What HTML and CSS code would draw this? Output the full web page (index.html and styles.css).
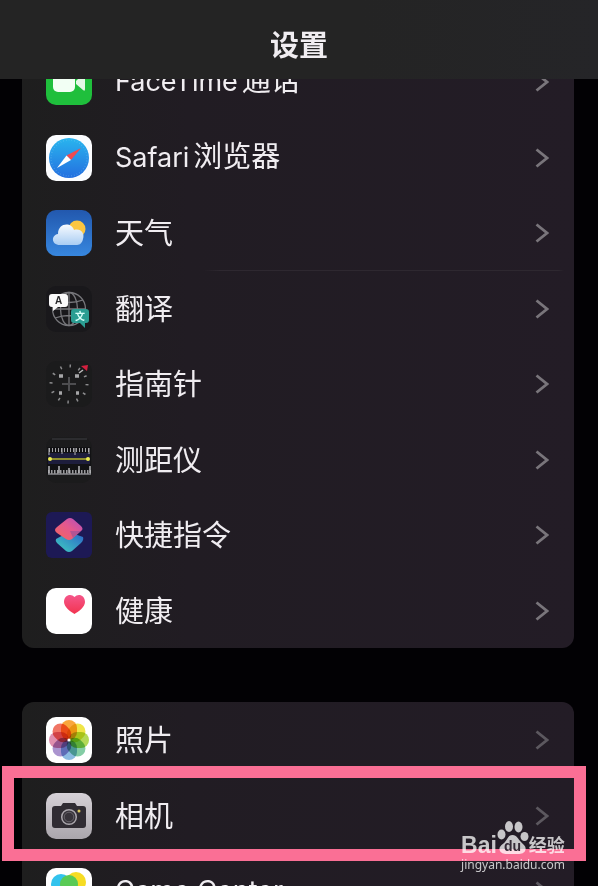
FILE: index.html
```html
<!DOCTYPE html>
<html lang="zh-CN">
<head>
    <meta charset="UTF-8">
    <meta name="viewport" content="width=device-width, initial-scale=1">
    <title>设置</title>
    <link rel="stylesheet" href="styles.css">
</head>
<body>
    <svg class="defs" aria-hidden="true">
        <symbol id="chevron" viewBox="0 0 14 20">
            <path d="M1.5 1.5 12 10 1.5 18.5" fill="none" stroke="currentColor" stroke-width="2.8"/>
        </symbol>
    </svg>

    <header class="topbar">
        <h1>设置</h1>
    </header>

    <main class="content">
        <ul class="group scrolled">
            <li>
                <a class="row" href="#facetime">
                    <svg class="icon" viewBox="0 0 46 46">
                        <rect width="46" height="46" rx="10" fill="#1fbf3c"/>
                        <rect x="7" y="13" width="22" height="20" rx="5" fill="#f2fff4"/>
                        <path d="M30 22 37 15Q39 14 39 17V30Q39 33 37 31L30 25Z" fill="#e4f8e6"/>
                    </svg>
                    <span class="label"><span class="latin">FaceTime</span>通话</span>
                    <svg class="chevron"><use href="#chevron"/></svg>
                </a>
            </li>
            <li>
                <a class="row" href="#safari">
                    <svg class="icon" viewBox="0 0 46 46">
                        <defs>
                            <linearGradient id="sky" x1="0" y1="0" x2="0" y2="1">
                                <stop offset="0" stop-color="#29b5ee"/>
                                <stop offset="1" stop-color="#246fe0"/>
                            </linearGradient>
                        </defs>
                        <rect width="46" height="46" rx="10" fill="#fcfdff"/>
                        <circle cx="23" cy="23" r="20" fill="url(#sky)"/>
                        <circle cx="23" cy="23" r="18" fill="none" stroke="#8fd4f6" stroke-width="1.5" stroke-dasharray="0.6 2.2" opacity=".4"/>
                        <path d="M35 13 20.5 20.5 25 25Z" fill="#ef4a50"/>
                        <path d="M11 33 20.5 20.5 25 25Z" fill="#fff"/>
                    </svg>
                    <span class="label"><span class="latin">Safari</span>浏览器</span>
                    <svg class="chevron"><use href="#chevron"/></svg>
                </a>
            </li>
            <li class="divided">
                <a class="row" href="#weather">
                    <svg class="icon" viewBox="0 0 46 46">
                        <defs>
                            <linearGradient id="day" x1="0" y1="0" x2="0" y2="1">
                                <stop offset="0" stop-color="#2258ae"/>
                                <stop offset="1" stop-color="#3787df"/>
                            </linearGradient>
                            <linearGradient id="cloud" x1="0" y1="0" x2="0" y2="1">
                                <stop offset="0" stop-color="#f8fbff"/>
                                <stop offset="1" stop-color="#a9cdf3"/>
                            </linearGradient>
                        </defs>
                        <rect width="46" height="46" rx="10" fill="url(#day)"/>
                        <circle cx="31" cy="19" r="8.5" fill="#fbc641"/>
                        <path d="M14 35C5 35 5 25 12 24C12 12 26 12 28 20C35 18 39 24 37 29C36 34 33 35 30 35Z" fill="url(#cloud)"/>
                    </svg>
                    <span class="label">天气</span>
                    <svg class="chevron"><use href="#chevron"/></svg>
                </a>
            </li>
            <li>
                <a class="row" href="#translate">
                    <svg class="icon" viewBox="0 0 46 46">
                        <rect width="46" height="46" rx="10" fill="#19181b"/>
                        <g fill="none" stroke="#77777b" stroke-width="1.3">
                            <circle cx="23" cy="23" r="16.5"/>
                            <ellipse cx="23" cy="23" rx="8.5" ry="16.5"/>
                            <path d="M23 6V40M6 23H40M9 14Q23 19 37 14M9 32Q23 27 37 32"/>
                        </g>
                        <path d="M6 8H19Q22 8 22 11V18Q22 21 19 21H12L7 25V21H6Q3 21 3 18V11Q3 8 6 8Z" fill="#fafafa"/>
                        <text class="glyph-a" x="9" y="18">A</text>
                        <path d="M28 23H40Q43 23 43 26V34Q43 37 40 37H39V42L34 37H28Q25 37 25 34V26Q25 23 28 23Z" fill="#2b9d92"/>
                        <text class="glyph-wen" x="29" y="34">文</text>
                    </svg>
                    <span class="label">翻译</span>
                    <svg class="chevron"><use href="#chevron"/></svg>
                </a>
            </li>
            <li>
                <a class="row" href="#compass">
                    <svg class="icon" viewBox="0 0 46 46">
                        <rect width="46" height="46" rx="10" fill="#1b1b1c"/>
                        <circle cx="23" cy="23" r="18" fill="none" stroke="#8c8c8e" stroke-width="3" stroke-dasharray="1.5 7.925"/>
                        <path d="M23 16V30M16 23H30" stroke="#4d4d50" stroke-width="2"/>
                        <path d="M13 15H17M29 15H33M13 32H16M30 32H33" stroke="#a6a6a8" stroke-width="3.5"/>
                        <path d="M33 12 37 9" stroke="#bbb" stroke-width="1.5"/>
                        <path d="M35 5 42 4 41 10Z" fill="#d4203f"/>
                    </svg>
                    <span class="label">指南针</span>
                    <svg class="chevron"><use href="#chevron"/></svg>
                </a>
            </li>
            <li>
                <a class="row" href="#measure">
                    <svg class="icon" viewBox="0 0 46 46">
                        <rect width="46" height="46" rx="10" fill="#1b1b1c"/>
                        <path d="M6 2H41" stroke="#3f3f42"/>
                        <rect x="1" y="10" width="44" height="27" fill="#121214"/>
                        <rect x="2" y="16" width="42" height="11" fill="#1d1d3c"/>
                        <path d="M3 13H44" stroke="#a3a3a6" stroke-width="4" stroke-dasharray="1 2"/>
                        <path d="M3 11V18M16 11V17M29 11V18M43 11V17" stroke="#b5b5b8"/>
                        <path d="M2 35H45" stroke="#9a9a9d" stroke-width="4" stroke-dasharray="1.5 1.5"/>
                        <path d="M2 37H45" stroke="#8d8d90" stroke-width="1.5"/>
                        <path d="M3 29V36M13 29V36M23 31V36M33 29V36M44 29V36" stroke="#b5b5b8" stroke-width="1.5"/>
                        <path d="M4 22H42" stroke="#b6b62a" stroke-width="1.6"/>
                        <circle cx="4" cy="22" r="2" fill="#ecec52"/>
                        <circle cx="42" cy="22" r="2" fill="#ecec52"/>
                    </svg>
                    <span class="label">测距仪</span>
                    <svg class="chevron"><use href="#chevron"/></svg>
                </a>
            </li>
            <li>
                <a class="row" href="#shortcuts">
                    <svg class="icon" viewBox="0 0 46 46">
                        <defs>
                            <linearGradient id="pink" x1="1" y1="0" x2="0" y2="1">
                                <stop offset="0" stop-color="#ae4fc0"/>
                                <stop offset=".45" stop-color="#e4588f"/>
                                <stop offset="1" stop-color="#f3665b"/>
                            </linearGradient>
                            <linearGradient id="teal" x1="1" y1="0" x2="0" y2="1">
                                <stop offset="0" stop-color="#2b62c8"/>
                                <stop offset="1" stop-color="#40cfc0"/>
                            </linearGradient>
                        </defs>
                        <rect width="46" height="46" rx="6" fill="#1d1955"/>
                        <path d="M10 27 23 20 37 25Q38 28 35 31L26 39Q23 41 20 39L11 31Q9 29 10 27Z" fill="url(#teal)"/>
                        <path d="M21 7Q24 5 27 7L35 14Q38 17 35 19L26 27Q23 29 20 27L11 21Q7 18 11 15Z" fill="url(#pink)"/>
                        <path d="M24 19 35 19 27 26Z" fill="#81509b" opacity=".5"/>
                    </svg>
                    <span class="label">快捷指令</span>
                    <svg class="chevron"><use href="#chevron"/></svg>
                </a>
            </li>
            <li>
                <a class="row" href="#health">
                    <svg class="icon" viewBox="0 0 46 46">
                        <defs>
                            <linearGradient id="heart" x1="0" y1="0" x2="0" y2="1">
                                <stop offset="0" stop-color="#f5568a"/>
                                <stop offset="1" stop-color="#f23450"/>
                            </linearGradient>
                        </defs>
                        <rect width="46" height="46" rx="10" fill="#fff"/>
                        <path d="M28.5 9C25 5 18 7 18 14C18 19 25 24 28.5 26C32 24 39 19 39 14C39 7 32 5 28.5 9Z" fill="url(#heart)"/>
                    </svg>
                    <span class="label">健康</span>
                    <svg class="chevron"><use href="#chevron"/></svg>
                </a>
            </li>
        </ul>

        <ul class="group dim">
            <li>
                <a class="row" href="#photos">
                    <svg class="icon" viewBox="0 0 46 46">
                        <rect width="46" height="46" rx="10" fill="#fff"/>
                        <g class="petals">
                            <rect x="15" y="3" width="16" height="20" rx="8" fill="#f9a63c"/>
                            <rect x="15" y="3" width="16" height="20" rx="8" fill="#efe548" transform="rotate(45 23 23)"/>
                            <rect x="15" y="3" width="16" height="20" rx="8" fill="#b3d957" transform="rotate(90 23 23)"/>
                            <rect x="15" y="3" width="16" height="20" rx="8" fill="#84cda5" transform="rotate(135 23 23)"/>
                            <rect x="15" y="3" width="16" height="20" rx="8" fill="#8cbbe2" transform="rotate(180 23 23)"/>
                            <rect x="15" y="3" width="16" height="20" rx="8" fill="#ab94cf" transform="rotate(225 23 23)"/>
                            <rect x="15" y="3" width="16" height="20" rx="8" fill="#e08fae" transform="rotate(270 23 23)"/>
                            <rect x="15" y="3" width="16" height="20" rx="8" fill="#f07565" transform="rotate(315 23 23)"/>
                        </g>
                        <circle cx="23" cy="23" r="1.6" fill="#fff"/>
                    </svg>
                    <span class="label">照片</span>
                    <svg class="chevron"><use href="#chevron"/></svg>
                </a>
            </li>
            <li class="marked">
                <a class="row" href="#camera">
                    <svg class="icon" viewBox="0 0 46 46">
                        <defs>
                            <linearGradient id="steel" x1="0" y1="0" x2="0" y2="1">
                                <stop offset="0" stop-color="#d6d1d7"/>
                                <stop offset="1" stop-color="#aaa6ac"/>
                            </linearGradient>
                        </defs>
                        <rect width="46" height="46" rx="10" fill="url(#steel)"/>
                        <path d="M9 13H15L17 10H29L31 13H37Q40 13 40 16V32Q40 35 37 35H9Q6 35 6 32V16Q6 13 9 13Z" fill="#302c33"/>
                        <circle cx="23" cy="24" r="7.3" fill="#37333a" stroke="#aaa6ac" stroke-width="1.5"/>
                        <circle cx="23" cy="24" r="4.8" fill="none" stroke="#67636a"/>
                        <circle cx="33" cy="18" r="1.5" fill="#d8c65c"/>
                    </svg>
                    <span class="label">相机</span>
                    <svg class="chevron"><use href="#chevron"/></svg>
                </a>
            </li>
            <li>
                <a class="row" href="#game-center">
                    <svg class="icon" viewBox="0 0 46 46">
                        <rect width="46" height="46" rx="10" fill="#fff"/>
                        <circle cx="15" cy="16" r="10" fill="#32c3ed"/>
                        <circle cx="30" cy="14" r="10" fill="#f6dc24"/>
                        <circle cx="23" cy="16" r="9" fill="#59ca55"/>
                        <circle cx="31" cy="31" r="10" fill="#f0568f"/>
                        <circle cx="15" cy="31" r="9" fill="#8a62d6"/>
                    </svg>
                    <span class="label"><span class="latin">Game Center</span></span>
                    <svg class="chevron"><use href="#chevron"/></svg>
                </a>
            </li>
        </ul>
    </main>

    <aside class="watermark">
        <div class="brand">
            <span class="bai">Bai</span>
            <svg class="paw" viewBox="0 0 32 34">
                <g fill="currentColor">
                    <ellipse cx="4.500" cy="13.500" rx="4" ry="5"/>
                    <ellipse cx="12" cy="5.500" rx="4" ry="5.400"/>
                    <ellipse cx="21.500" cy="6" rx="4" ry="5.400"/>
                    <ellipse cx="27.500" cy="15.500" rx="4" ry="4.600"/>
                    <path d="M15.500 14C20 14 21 18 24 21C27 24 30 26 28 30C26 34 19 33 15.500 33C12 33 5 34 3 30C1 26 5 24 8 21C11 18 11 14 15.500 14Z"/>
                </g>
                <text class="du" x="7" y="30">du</text>
            </svg>
            <span class="jingyan">经验</span>
        </div>
        <div class="site">jingyan.baidu.com</div>
    </aside>
</body>
</html>
```

FILE: styles.css
```css
* {
    box-sizing: border-box;
}

body {
    margin: 0;
    height: 100vh;
    display: flex;
    flex-direction: column;
    overflow: hidden;
    position: relative;
    background-color: #020104;
    color: #f0edf1;
    font-family: "Noto Sans CJK SC", sans-serif;
    font-size: 29px;
}

.defs {
    display: none;
}

.topbar {
    padding: 23px 0 16px;
    background: linear-gradient(to right, #242424 60%, #252528);
    text-align: center;
}

h1 {
    margin: 0;
    font-size: 29px;
    font-weight: 700;
    line-height: 40px;
}

.content {
    flex: 1;
    min-height: 0;
    overflow: hidden;
    padding: 0 24px 0 22px;
}

.group {
    list-style: none;
    margin: 0 0 54px;
    padding: 0;
    border-radius: 12px;
    background: linear-gradient(to right, #1e1e1e, #211c23 30%, #231c26);
}

/* first group is partly scrolled under the bar */
.scrolled {
    margin-top: -35px;
}

.group li:nth-child(odd) {
    border-bottom: 1px solid transparent;
}

.group .divided {
    border-image: linear-gradient(to right, transparent 33%, #2e2830 36%, #2e2830 97%, transparent 98%) 1;
}

.group li:last-child {
    border-bottom: 0;
}

.row {
    display: flex;
    align-items: center;
    gap: 23px;
    height: 75px;
    padding: 0 25px 0 24px;
    color: inherit;
    text-decoration: none;
}

.icon {
    width: 46px;
    height: 46px;
    flex: none;
}

.label {
    flex: 1;
    padding-bottom: 4px;
    line-height: 40px;
    white-space: nowrap;
}

.latin {
    font-family: Inter, sans-serif;
    font-size: 27px;
    margin-right: 4px;
}

.chevron {
    width: 14px;
    height: 20px;
    flex: none;
    color: #79757b;
}

.dim .chevron {
    color: #5c585f;
}

.petals {
    isolation: isolate;
}

.petals rect {
    mix-blend-mode: multiply;
}

.glyph-a {
    font: bold 10px "Liberation Sans", sans-serif;
    fill: #29292b;
}

.glyph-wen {
    font: bold 10px "Noto Sans CJK SC", sans-serif;
    fill: #d9fffa;
}

/* frame around the highlighted row */
.marked {
    position: relative;
}

.marked::after {
    content: "";
    position: absolute;
    inset: -12px -12px -8px -20px;
    border: 12px solid #fa6f95;
    pointer-events: none;
}

.watermark {
    position: absolute;
    right: 33px;
    bottom: 13px;
    color: rgba(255, 255, 255, 0.75);
}

.brand {
    display: flex;
    align-items: flex-end;
    height: 34px;
}

.bai {
    font: bold 23px/20px "Liberation Sans", sans-serif;
}

.paw {
    width: 32px;
    height: 34px;
}

.jingyan {
    font-size: 18px;
    font-weight: 700;
    line-height: 22px;
}

.du {
    font: bold 14px "Liberation Sans", sans-serif;
    fill: #332a35;
}

.site {
    margin-top: 2px;
    font: 12px/16px "DejaVu Sans", sans-serif;
    font-family: "Noto Sans", sans-serif;
}
```
